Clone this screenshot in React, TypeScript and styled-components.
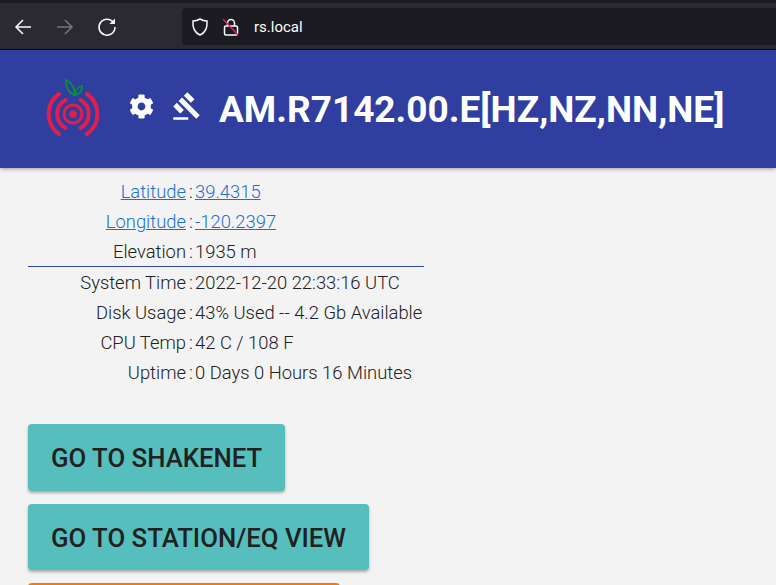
import styled, { createGlobalStyle } from "styled-components";
import { FaCog } from "react-icons/fa";
import { MdGavel } from "react-icons/md";

const Global = createGlobalStyle`
  html, body {
    margin: 0;
    height: 100%;
    overflow: hidden;
    background: #f3f3f3;
    font-family: Roboto, "Liberation Sans", sans-serif;
  }
`;

const Page = styled.div`
  width: 776px;
  height: 585px;
  overflow: hidden;
`;

const BrowserBar = styled.div`
  height: 50px;
  box-sizing: border-box;
  border-top: 3px solid #1c1b22;
  border-bottom: 1px solid #0c0c0d;
  background: #2b2a33;
  display: flex;
  align-items: center;
  padding: 1px 0 0 13px;
`;

const NavButton = styled.div`
  width: 20px;
  height: 20px;
  margin-right: 22px;
  display: flex;
`;

const UrlBox = styled.div`
  flex: 1;
  height: 37px;
  margin-left: 43px;
  background: #1c1b22;
  border-radius: 4px 0 0 4px;
  display: flex;
  align-items: center;
  padding-left: 9px;
  gap: 14px;
  color: #fbfbfe;
  font-size: 15px;
`;

const UrlText = styled.span`
  margin-left: 1px;
`;

const Header = styled.header`
  height: 118px;
  background: #303f9f;
  box-shadow: 0 1px 4px rgba(0, 0, 0, 0.35);
  display: flex;
  align-items: center;
  padding-left: 44px;
  color: #fff;
  position: relative;
`;

const Logo = styled.svg`
  width: 60px;
  height: 60px;
  margin-right: 25px;
`;

const HeaderIcons = styled.div`
  display: flex;
  align-items: center;
  gap: 18px;
  margin-right: 17px;
  margin-top: -6px;
`;

const Title = styled.h1`
  margin: 0;
  font-size: 37px;
  font-weight: 700;
  line-height: 1;
  white-space: nowrap;
`;

const InfoTable = styled.div`
  width: 396px;
  margin: 8px 0 0 28px;
`;

const InfoRow = styled.div`
  display: grid;
  grid-template-columns: 158px 9px 1fr;
  height: 30px;
  box-sizing: border-box;
  padding-top: 1px;
  align-items: center;
  font-size: 18.4px;
  font-weight: 300;
  color: #212121;
  white-space: nowrap;
`;

const Label = styled.div`
  text-align: right;
`;

const Colon = styled.div`
  text-align: center;
  padding-left: 1px;
`;

const InfoLink = styled.a`
  color: #1a6fd0;
  text-decoration: underline;
`;

const Divider = styled.div`
  height: 1px;
  background: #3041b4;
`;

const Buttons = styled.div`
  margin: 37px 0 0 28px;
  display: flex;
  flex-direction: column;
  align-items: flex-start;
  gap: 13px;
`;

const ActionButton = styled.button<{ $bg: string; $width?: number }>`
  height: 66.5px;
  width: ${(p) => (p.$width ? `${p.$width}px` : "auto")};
  padding: 2px 23px 0;
  border: 0;
  border-radius: 4px;
  background: ${(p) => p.$bg};
  color: #212121;
  font-family: inherit;
  font-size: 25.75px;
  font-weight: 500;
  box-shadow: 0 2px 3px rgba(0, 0, 0, 0.3);
  white-space: nowrap;
`;

const top = [
  { label: "Latitude", value: "39.4315", link: true },
  { label: "Longitude", value: "-120.2397", link: true },
  { label: "Elevation", value: "1935 m" },
];

const bottom = [
  { label: "System Time", value: "2022-12-20 22:33:16 UTC" },
  { label: "Disk Usage", value: "43% Used -- 4.2 Gb Available" },
  { label: "CPU Temp", value: "42 C / 108 F" },
  { label: "Uptime", value: "0 Days 0 Hours 16 Minutes" },
];

type Info = { label: string; value: string; link?: boolean };

function Row({ label, value, link }: Info) {
  return (
    <InfoRow>
      <Label>{link ? <InfoLink href="#">{label}</InfoLink> : label}</Label>
      <Colon>:</Colon>
      <div>{link ? <InfoLink href="#">{value}</InfoLink> : value}</div>
    </InfoRow>
  );
}

export default function App() {
  return (
    <Page>
      <Global />
      <BrowserBar>
        <NavButton>
          <svg width="20" height="20" viewBox="0 0 20 20" fill="none" stroke="#fbfbfe" strokeWidth="1.5">
            <path d="M18 10H3M10 3l-7 7 7 7" />
          </svg>
        </NavButton>
        <NavButton>
          <svg width="20" height="20" viewBox="0 0 20 20" fill="none" stroke="#77767c" strokeWidth="1.5">
            <path d="M2 10h15M10 3l7 7-7 7" />
          </svg>
        </NavButton>
        <NavButton>
          <svg width="20" height="20" viewBox="0 0 20 20" fill="none" stroke="#fbfbfe" strokeWidth="1.5">
            <path d="M16.5 5.5A8 8 0 1 0 18 10" />
            <path d="M12.5 7H18V1.5z" fill="#fbfbfe" stroke="none" />
          </svg>
        </NavButton>
        <UrlBox>
          <svg width="18" height="20" viewBox="0 0 18 20" fill="none" stroke="#fbfbfe" strokeWidth="1.5">
            <path d="M9 2c2 1.3 4.500 2 7 2 .5 6-1 11.500-7 14C3 15.500 1.500 10 2 4c2.500 0 5-.7 7-2z" />
          </svg>
          <svg width="16" height="20" viewBox="0 0 16 20" fill="none">
            <path d="M4.500 9V6a3.500 3.500 0 0 1 7 0v3" stroke="#fbfbfe" strokeWidth="1.500" />
            <rect x="1.500" y="9" width="13" height="9" rx="1.500" stroke="#fbfbfe" strokeWidth="1.500" />
            <path d="M0 2l15 16" stroke="#e22850" strokeWidth="1.500" />
          </svg>
          <UrlText>rs.local</UrlText>
        </UrlBox>
      </BrowserBar>
      <Header>
        <Logo viewBox="0 0 60 60" fill="none">
          <g stroke="#e01f4b" strokeLinecap="round">
            <circle cx="29" cy="35" r="9" strokeWidth="3" />
            <circle cx="29" cy="35" r="3.500" fill="#e01f4b" strokeWidth="1" />
            <path d="M21.500 21A16 16 0 0 0 21.500 49M36.500 21A16 16 0 0 1 36.500 49" strokeWidth="4" />
            <path d="M15 15A24.500 24.500 0 0 0 15 55M43 15A24.500 24.500 0 0 1 43 55" strokeWidth="4" />
          </g>
          <g stroke="#0a8f3c" strokeWidth="1.800" fill="none">
            <path d="M22 1c5 2.500 9 7 9 15-5.500-1.500-9.500-7-9-15z" />
            <path d="M38 7c-4 1-7 4.500-7 9 4-.5 7-4 7-9z" />
          </g>
        </Logo>
        <HeaderIcons>
          <FaCog size={25} />
          <MdGavel size={30} />
        </HeaderIcons>
        <Title>AM.R7142.00.E[HZ,NZ,NN,NE]</Title>
      </Header>
      <InfoTable>
        {top.map((r) => (
          <Row key={r.label} {...r} />
        ))}
        <Divider />
        {bottom.map((r) => (
          <Row key={r.label} {...r} />
        ))}
      </InfoTable>
      <Buttons>
        <ActionButton $bg="#56bfbd">GO TO SHAKENET</ActionButton>
        <ActionButton $bg="#56bfbd">GO TO STATION/EQ VIEW</ActionButton>
        <ActionButton $bg="#f57c00" $width={312} aria-label="More actions" />
      </Buttons>
    </Page>
  );
}
